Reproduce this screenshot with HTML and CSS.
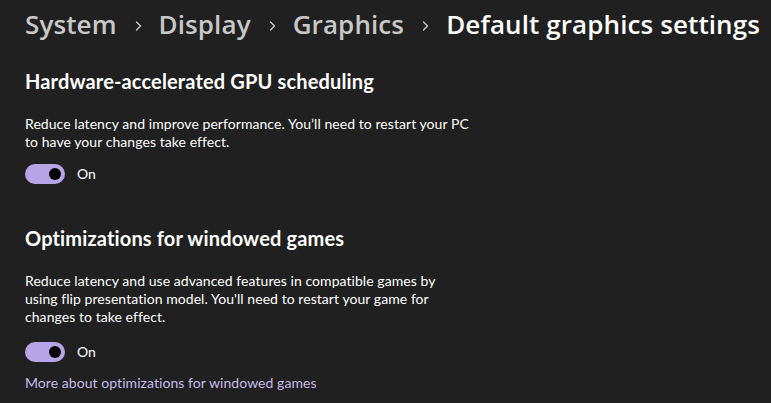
FILE: index.html
```html
<!DOCTYPE html>
<html lang="en">
<head>
<meta charset="utf-8">
<title>Default graphics settings</title>
<link rel="stylesheet" href="styles.css">
</head>
<body>
<main class="page">
  <nav class="breadcrumb">
    <span class="crumb">System</span>
    <span class="sep"><svg width="8" height="10" viewBox="0 0 8 10"><path d="M1.5 1 L5.5 5 L1.5 9" fill="none" stroke="#c8c8c8" stroke-width="1.4" stroke-linecap="round" stroke-linejoin="round"/></svg></span>
    <span class="crumb">Display</span>
    <span class="sep"><svg width="8" height="10" viewBox="0 0 8 10"><path d="M1.5 1 L5.5 5 L1.5 9" fill="none" stroke="#c8c8c8" stroke-width="1.4" stroke-linecap="round" stroke-linejoin="round"/></svg></span>
    <span class="crumb">Graphics</span>
    <span class="sep"><svg width="8" height="10" viewBox="0 0 8 10"><path d="M1.5 1 L5.5 5 L1.5 9" fill="none" stroke="#c8c8c8" stroke-width="1.4" stroke-linecap="round" stroke-linejoin="round"/></svg></span>
    <span class="crumb current">Default graphics settings</span>
  </nav>

  <section class="setting first">
    <h2 class="title">Hardware-accelerated GPU scheduling</h2>
    <p class="desc">Reduce latency and improve performance. You’ll need to restart your PC<br>to have your changes take effect.</p>
    <div class="toggle-row">
      <span class="toggle"><span class="knob"></span></span>
      <span class="state">On</span>
    </div>
  </section>

  <section class="setting second">
    <h2 class="title">Optimizations for windowed games</h2>
    <p class="desc">Reduce latency and use advanced features in compatible games by<br>using flip presentation model. You'll need to restart your game for<br>changes to take effect.</p>
    <div class="toggle-row">
      <span class="toggle"><span class="knob"></span></span>
      <span class="state">On</span>
    </div>
    <a class="link" href="#">More about optimizations for windowed games</a>
  </section>
</main>
</body>
</html>
```
FILE: styles.css
```css
html, body {
  margin: 0;
  padding: 0;
  background: #202020;
}
body {
  width: 771px;
  height: 403px;
  overflow: hidden;
  color: #ffffff;
  font-family: Lato, "Noto Sans", sans-serif;
}
.page {
  padding: 6px 0 0 25px;
}
.breadcrumb {
  display: flex;
  align-items: center;
  height: 36px;
  font-family: "Open Sans", "Noto Sans", sans-serif;
  font-size: 26px;
  font-weight: 600;
  line-height: 36px;
  white-space: nowrap;
}
.crumb {
  color: #c8c8c8;
  letter-spacing: 0.1px;
}
.crumb.current {
  color: #ffffff;
}
.sep {
  display: flex;
  margin: 4px 16px 0 18px;
}
.setting {
  display: flex;
  flex-direction: column;
  align-items: flex-start;
}
.setting.first {
  margin-top: 27px;
}
.setting.second {
  margin-top: 42px;
}
.title {
  margin: 0 0 22px;
  font-size: 20px;
  font-weight: 700;
  line-height: 24px;
  letter-spacing: 0.15px;
}
.desc {
  margin: 0;
  width: 460px;
  font-size: 14px;
  line-height: 18px;
  letter-spacing: 0.06px;
}
.toggle-row {
  display: flex;
  align-items: center;
  gap: 12px;
  margin-top: 16px;
  height: 20px;
}
.first .toggle-row {
  margin-top: 13px;
}
.toggle {
  display: flex;
  align-items: center;
  justify-content: flex-end;
  box-sizing: border-box;
  width: 40px;
  height: 20px;
  padding-right: 4px;
  border-radius: 10px;
  background: #b5a5e6;
}
.knob {
  width: 12px;
  height: 12px;
  border-radius: 50%;
  background: #000000;
}
.state {
  font-size: 14px;
  line-height: 18px;
}
.link {
  margin-top: 12px;
  color: #c9bbea;
  font-size: 14px;
  line-height: 18px;
  text-decoration: none;
  letter-spacing: 0.06px;
}
```
